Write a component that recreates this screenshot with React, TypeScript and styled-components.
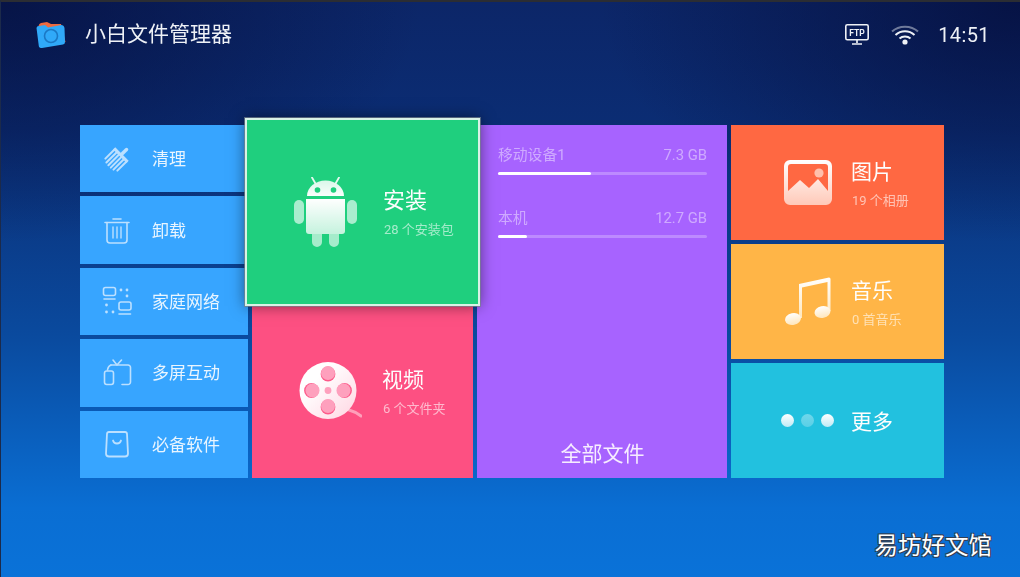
import React from "react";
import styled, { createGlobalStyle } from "styled-components";

const Global = createGlobalStyle`
  html, body { margin: 0; padding: 0; background: #0b2a6e; }
  * { box-sizing: border-box; }
`;

const Screen = styled.div`
  position: relative;
  width: 1020px;
  height: 577px;
  overflow: hidden;
  border-top: 2px solid #2b2d33;
  border-left: 1px solid #1c2a4a;
  font-family: Roboto, "Noto Sans CJK SC", sans-serif;
  color: #fff;
  background:
    radial-gradient(ellipse 420px 240px at 0% 0%, rgba(5, 14, 60, 0.75), rgba(5, 14, 60, 0) 100%),
    radial-gradient(ellipse 420px 240px at 100% 0%, rgba(5, 14, 60, 0.8), rgba(5, 14, 60, 0) 100%),
    linear-gradient(180deg, #0c2668 0%, #0b2d74 22%, #0a4a9e 58%, #0a6ed3 88%, #0a72d8 100%);
`;

const Header = styled.header`
  height: 65px;
  display: flex;
  align-items: center;
  padding: 0 30px 0 35px;
  filter: blur(0.35px);
`;

const Title = styled.h1`
  margin: 0 0 1px 19px;
  font-size: 21px;
  line-height: 30px;
  font-weight: 400;
  color: #eef1f6;
  flex: 1;
`;

const Clock = styled.span`
  margin-left: 19px;
  font-size: 20px;
  letter-spacing: 0.4px;
  color: #eef1f6;
`;

const StatusIcon = styled.svg`
  display: block;
`;

const WifiWrap = styled.div`
  margin-left: 22px;
`;

const Board = styled.main`
  margin: 58px 0 0 79px;
  width: 864px;
  height: 353px;
  display: grid;
  grid-template-columns: 168px 221px 250px 213px;
  gap: 4px;
  filter: blur(0.35px);
`;

const Stack = styled.div`
  display: grid;
  grid-auto-rows: 1fr;
  gap: 4px;
  min-height: 0;
`;

const ToolItem = styled.div`
  background: #37a5ff;
  display: flex;
  align-items: center;
  padding-left: 22px;
`;

const ToolIcon = styled.svg`
  width: 30px;
  height: 30px;
  flex: none;
`;

const ToolLabel = styled.span`
  margin: 0 0 2px 20px;
  font-size: 17px;
  color: #e9f5ff;
`;

const Tile = styled.div<{ $bg: string; $pad: number }>`
  background: ${(p) => p.$bg};
  display: flex;
  align-items: center;
  padding-left: ${(p) => p.$pad}px;
  min-height: 0;
`;

const FocusTile = styled(Tile)`
  position: relative;
  z-index: 2;
  margin: -7px -7px -6px;
  border: 2px solid #d9f2e6;
  outline: 1px solid rgba(120, 130, 140, 0.7);
  box-shadow: 0 0 14px rgba(0, 0, 0, 0.5);
`;

const TileText = styled.div<{ $gap: number }>`
  margin: 3px 0 0 ${(p) => p.$gap}px;
  display: flex;
  flex-direction: column;
  gap: 4px;
`;

const TileTitle = styled.div<{ $large?: boolean }>`
  font-size: ${(p) => (p.$large ? 22 : 21)}px;
  line-height: 30px;
  color: #fdfdfd;
`;

const TileSub = styled.div`
  font-size: 13px;
  line-height: 20px;
  padding-left: 1px;
  color: rgba(255, 255, 255, 0.6);
  white-space: nowrap;
`;

const Files = styled.div`
  background: #a763ff;
  padding: 20px 20px 0 21px;
  display: flex;
  flex-direction: column;
`;

const Device = styled.div`
  margin-bottom: 33px;
`;

const DeviceRow = styled.div`
  display: flex;
  justify-content: space-between;
  font-size: 14.8px;
  line-height: 20px;
  color: rgba(255, 255, 255, 0.45);
`;

const Track = styled.div`
  margin-top: 7px;
  height: 3px;
  border-radius: 2px;
  background: rgba(255, 255, 255, 0.25);
`;

const Fill = styled.div`
  height: 100%;
  border-radius: 2px;
  background: #fff;
`;

const FilesLabel = styled.div`
  margin-top: auto;
  padding-bottom: 9px;
  text-align: center;
  font-size: 21px;
  line-height: 30px;
  color: #f6ecff;
`;

const Dots = styled.div`
  display: flex;
  gap: 7px;
`;

const Dot = styled.span<{ $dim?: boolean }>`
  width: 13px;
  height: 13px;
  border-radius: 50%;
  background: linear-gradient(180deg, #fff, #bfeaf5);
  opacity: ${(p) => (p.$dim ? 0.35 : 1)};
`;

const Watermark = styled.div`
  position: absolute;
  right: 28px;
  bottom: 16px;
  font-size: 23.5px;
  line-height: 34px;
  color: #fff;
  font-family: "Noto Sans CJK SC", sans-serif;
  text-shadow: -1px -1px 0 #2f3f55, 1px -1px 0 #2f3f55, -1px 1px 0 #2f3f55, 1px 1px 0 #2f3f55;
`;

const Logo = () => (
  <svg width="30" height="28" viewBox="0 0 30 28">
    <path d="M2.5 5 Q3 2.5 5 2 L11 1 L15 3 L25 3 L29.5 21 L4 25 Z" fill="#ee6a3e" />
    <path d="M0.5 7 Q0.5 5 3 5 L9 4 L12 6.5 L25 4 Q28 4 28.5 7 L29 21 Q29 23 27 23.5 L6 27 Q3 27 2.8 25 Z" fill="#30a9f8" />
    <circle cx="15" cy="15" r="6.5" fill="none" stroke="#1b78c4" strokeWidth="1.6" />
  </svg>
);

const FtpIcon = () => (
  <StatusIcon width="24" height="21" viewBox="0 0 24 21">
    <rect x="0.8" y="0.8" width="22.4" height="15" rx="1.5" fill="none" stroke="#eef1f6" strokeWidth="1.6" />
    <text x="12" y="12" textAnchor="middle" fontSize="8.5" fontWeight="700" fontFamily="Roboto, sans-serif" fill="#eef1f6">FTP</text>
    <path d="M12 16v3M7 20h10" stroke="#eef1f6" strokeWidth="1.7" />
  </StatusIcon>
);

const WifiIcon = () => (
  <StatusIcon width="28" height="21" viewBox="0 0 28 21">
    <path d="M1 7.5 C8 1 20 1 27 7.5" fill="none" stroke="#eef1f6" strokeOpacity="0.45" strokeWidth="2" />
    <path d="M4.5 11 C10 6 18 6 23.5 11" fill="none" stroke="#eef1f6" strokeWidth="2" />
    <path d="M8.5 14.5 C11.5 11.8 16.5 11.8 19.5 14.5" fill="none" stroke="#eef1f6" strokeWidth="2" />
    <circle cx="14" cy="18" r="2.6" fill="#eef1f6" />
  </StatusIcon>
);

const line = "#bce0ff";
const s = { fill: "none", stroke: line, strokeWidth: 1.6, strokeLinecap: "round" as const, strokeLinejoin: "round" as const };

const Broom = () => (
  <ToolIcon viewBox="0 0 30 30">
    <g transform="rotate(45 15 15)" stroke={line} strokeLinecap="round">
      <path d="M15 1.5V8" strokeWidth="3.4" />
      <path d="M5.5 9.5h19" strokeWidth="3" strokeLinecap="butt" />
      <path d="M6.5 10v13M10 10v15M13.3 10v15.5M16.7 10v15.5M20 10v15M23.5 10v13" strokeWidth="2" />
    </g>
  </ToolIcon>
);

const Trash = () => (
  <ToolIcon viewBox="0 0 30 30">
    <path {...s} d="M3 7.5h24M11 4h8" />
    <path {...s} d="M5 7.5V25a3 3 0 0 0 3 3h14a3 3 0 0 0 3-3V7.5" />
    <path {...s} d="M11 12v11M15 12v11M19 12v11" strokeWidth={1.4} />
  </ToolIcon>
);

const HomeNet = () => (
  <ToolIcon viewBox="0 0 30 30">
    <rect {...s} x="1.5" y="1.5" width="12" height="8" rx="2" />
    <path {...s} d="M2 13h11" />
    <rect {...s} x="17" y="16" width="12" height="8" rx="2" />
    <path {...s} d="M17 28h11.5" />
    <g fill={line}>
      <circle cx="19" cy="4" r="1.4" />
      <circle cx="25" cy="4" r="1.4" />
      <circle cx="25" cy="10" r="1.4" />
      <circle cx="4.5" cy="19" r="1.4" />
      <circle cx="4.5" cy="26" r="1.4" />
      <circle cx="11" cy="26" r="1.4" />
    </g>
  </ToolIcon>
);

const Cast = () => (
  <ToolIcon viewBox="0 0 30 30">
    <path {...s} d="M11 2l4 5 4.5-5" />
    <path {...s} d="M9 7h17a2.5 2.5 0 0 1 2.5 2.5V24a2.5 2.5 0 0 1-2.5 2.5h-6" />
    <path {...s} d="M9 7 C6 8 6 10 5.5 12" />
    <rect {...s} x="2.5" y="13" width="9" height="13.5" rx="2.2" />
  </ToolIcon>
);

const Bag = () => (
  <ToolIcon viewBox="0 0 30 30">
    <path {...s} d="M7 3h16a2 2 0 0 1 2 1.8L26 24.5a3 3 0 0 1-3 3H7a3 3 0 0 1-3-3L5 4.8A2 2 0 0 1 7 3z" strokeWidth={1.8} />
    <path {...s} d="M11 11.5c1 4 7 4 8 0" strokeWidth={1.8} />
  </ToolIcon>
);

const Android = () => (
  <svg width="63" height="70" viewBox="0 0 63 70" style={{ flex: "none" }}>
    <defs>
      <linearGradient id="a1" gradientUnits="userSpaceOnUse" x1="0" y1="5" x2="0" y2="60">
        <stop offset="0" stopColor="#fff" stopOpacity="0.85" />
        <stop offset="0.3" stopColor="#fff" />
        <stop offset="1" stopColor="#fff" stopOpacity="0.72" />
      </linearGradient>
    </defs>
    <path fill="url(#a1)" d="M13 19a18.5 15.5 0 0 1 37 0z" />
    <path fill="url(#a1)" d="M12 22h39v32a3 3 0 0 1-3 3H15a3 3 0 0 1-3-3z" />
    <path d="M18 0.5l4 7M45 0.5l-4 7" stroke="#e6f8ef" strokeWidth="1.8" strokeLinecap="round" />
    <circle cx="23.5" cy="13" r="2.8" fill="#1fcf7e" />
    <circle cx="39.5" cy="13" r="2.8" fill="#1fcf7e" />
    <rect x="0" y="23" width="10" height="24" rx="5" fill="#fff" opacity="0.62" />
    <rect x="53" y="23" width="10" height="24" rx="5" fill="#fff" opacity="0.62" />
    <path d="M18 57h10v8a5 5 0 0 1-10 0zM35 57h10v8a5 5 0 0 1-10 0z" fill="#fff" opacity="0.6" />
  </svg>
);

const Reel = () => (
  <svg width="63" height="57" viewBox="0 0 63 57" style={{ flex: "none" }}>
    <defs>
      <linearGradient id="r1" x1="0" y1="0" x2="1" y2="1">
        <stop offset="0.3" stopColor="#fff" />
        <stop offset="1" stopColor="#ffd5e2" />
      </linearGradient>
    </defs>
    <path d="M50 48c4 1 8 3 12 6" fill="none" stroke="#fff" strokeOpacity="0.45" strokeWidth="3" strokeLinecap="round" />
    <circle cx="29" cy="28.5" r="28.5" fill="url(#r1)" />
    <g fill="#fd5a8a">
      <circle cx="29" cy="12" r="7.4" />
      <circle cx="29" cy="45" r="7.4" />
      <circle cx="12.5" cy="28.5" r="7.4" />
      <circle cx="45.5" cy="28.5" r="7.4" />
    </g>
    <g fill="#fea0bd">
      <circle cx="29" cy="11" r="7" />
      <circle cx="29" cy="44" r="7" />
      <circle cx="13.5" cy="28.5" r="7" />
      <circle cx="44.5" cy="28.5" r="7" />
      <circle cx="29" cy="28.5" r="3.4" />
    </g>
  </svg>
);

const Picture = () => (
  <svg width="48" height="45" viewBox="0 0 48 45" style={{ flex: "none" }}>
    <defs>
      <linearGradient id="p1" x1="0" y1="0" x2="0" y2="1">
        <stop offset="0" stopColor="#fff" />
        <stop offset="1" stopColor="#ffc9b8" />
      </linearGradient>
    </defs>
    <path fillRule="evenodd" fill="url(#p1)" d="M6 0h36a6 6 0 0 1 6 6v33a6 6 0 0 1-6 6H6a6 6 0 0 1-6-6V6a6 6 0 0 1 6-6zM7 4a3 3 0 0 0-3 3v24L16 20l9 8 9-9 10 12V7a3 3 0 0 0-3-3z" />
    <circle cx="35" cy="13" r="4.6" fill="#ffc0ac" />
  </svg>
);

const Music = () => (
  <svg width="46" height="49" viewBox="0 0 46 49" style={{ flex: "none" }}>
    <defs>
      <linearGradient id="m1" x1="0" y1="0" x2="0" y2="1">
        <stop offset="0" stopColor="#fff" />
        <stop offset="1" stopColor="#ffe6bb" />
      </linearGradient>
    </defs>
    <path fill="url(#m1)" d="M14 7L44 0.5a1.5 1.5 0 0 1 1.5 1.5V34h-3V5L17 10.5V41h-3z" />
    <ellipse cx="37.5" cy="35" rx="8" ry="6" fill="url(#m1)" transform="rotate(-12 37.5 35)" />
    <ellipse cx="8" cy="42" rx="8" ry="6" fill="url(#m1)" transform="rotate(-12 8 42)" />
  </svg>
);

const tools = [
  { label: "清理", Icon: Broom },
  { label: "卸载", Icon: Trash },
  { label: "家庭网络", Icon: HomeNet },
  { label: "多屏互动", Icon: Cast },
  { label: "必备软件", Icon: Bag },
];

const devices = [
  { name: "移动设备1", size: "7.3 GB", used: 44.5 },
  { name: "本机", size: "12.7 GB", used: 14 },
];

export default function App() {
  return (
    <Screen>
      <Global />
      <Header>
        <Logo />
        <Title>小白文件管理器</Title>
        <FtpIcon />
        <WifiWrap>
          <WifiIcon />
        </WifiWrap>
        <Clock>14:51</Clock>
      </Header>
      <Board>
        <Stack>
          {tools.map(({ label, Icon }) => (
            <ToolItem key={label}>
              <Icon />
              <ToolLabel>{label}</ToolLabel>
            </ToolItem>
          ))}
        </Stack>
        <Stack>
          <FocusTile $bg="#1fcf7e" $pad={47}>
            <Android />
            <TileText $gap={26}>
              <TileTitle $large>安装</TileTitle>
              <TileSub>28 个安装包</TileSub>
            </TileText>
          </FocusTile>
          <Tile $bg="#fd5082" $pad={47}>
            <Reel />
            <TileText $gap={20}>
              <TileTitle>视频</TileTitle>
              <TileSub>6 个文件夹</TileSub>
            </TileText>
          </Tile>
        </Stack>
        <Files>
          {devices.map((d) => (
            <Device key={d.name}>
              <DeviceRow>
                <span>{d.name}</span>
                <span>{d.size}</span>
              </DeviceRow>
              <Track>
                <Fill style={{ width: `${d.used}%` }} />
              </Track>
            </Device>
          ))}
          <FilesLabel>全部文件</FilesLabel>
        </Files>
        <Stack>
          <Tile $bg="#ff6842" $pad={53}>
            <Picture />
            <TileText $gap={19}>
              <TileTitle>图片</TileTitle>
              <TileSub>19 个相册</TileSub>
            </TileText>
          </Tile>
          <Tile $bg="#ffb547" $pad={54}>
            <Music />
            <TileText $gap={20}>
              <TileTitle>音乐</TileTitle>
              <TileSub>0 首音乐</TileSub>
            </TileText>
          </Tile>
          <Tile $bg="#22c1df" $pad={50}>
            <Dots>
              <Dot />
              <Dot $dim />
              <Dot />
            </Dots>
            <TileText $gap={17}>
              <TileTitle>更多</TileTitle>
            </TileText>
          </Tile>
        </Stack>
      </Board>
      <Watermark>易坊好文馆</Watermark>
    </Screen>
  );
}
